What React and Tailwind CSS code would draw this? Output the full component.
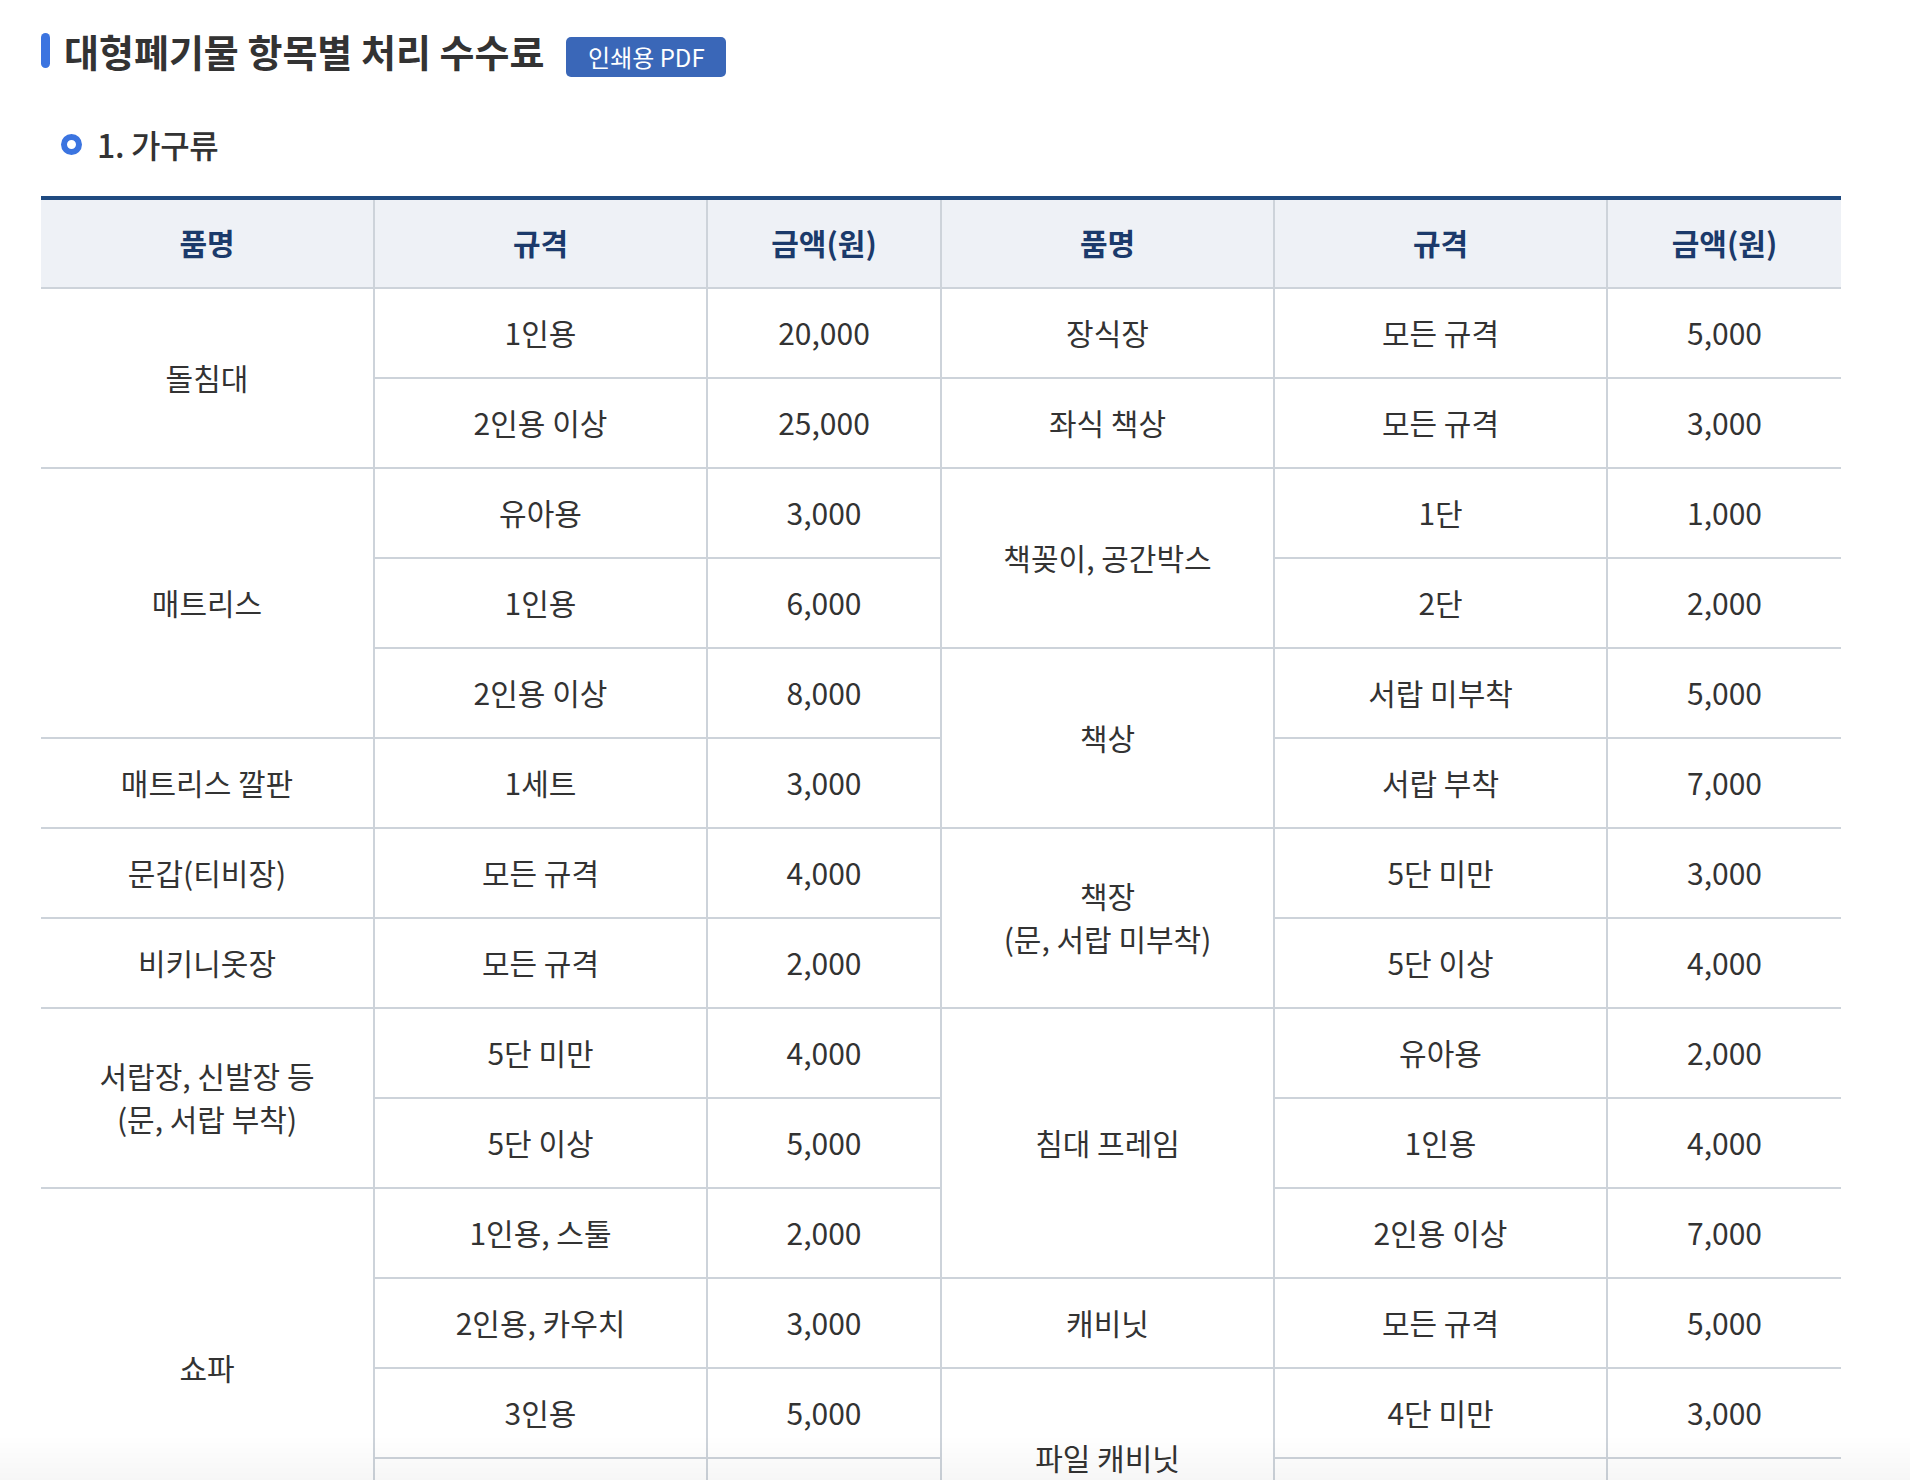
import React from 'react';

const font = { fontFamily: '"Noto Sans CJK KR", "Noto Sans", sans-serif' };

// each row: left half cells + right half cells, null = covered by rowspan
const rows = [
    [{ t: '돌침대', rs: 2 }, { t: '1인용' }, { t: '20,000' }, { t: '장식장' }, { t: '모든 규격' }, { t: '5,000' }],
    [null, { t: '2인용 이상' }, { t: '25,000' }, { t: '좌식 책상' }, { t: '모든 규격' }, { t: '3,000' }],
    [{ t: '매트리스', rs: 3 }, { t: '유아용' }, { t: '3,000' }, { t: '책꽂이, 공간박스', rs: 2 }, { t: '1단' }, { t: '1,000' }],
    [null, { t: '1인용' }, { t: '6,000' }, null, { t: '2단' }, { t: '2,000' }],
    [null, { t: '2인용 이상' }, { t: '8,000' }, { t: '책상', rs: 2 }, { t: '서랍 미부착' }, { t: '5,000' }],
    [{ t: '매트리스 깔판' }, { t: '1세트' }, { t: '3,000' }, null, { t: '서랍 부착' }, { t: '7,000' }],
    [{ t: '문갑(티비장)' }, { t: '모든 규격' }, { t: '4,000' }, { t: ['책장', '(문, 서랍 미부착)'], rs: 2 }, { t: '5단 미만' }, { t: '3,000' }],
    [{ t: '비키니옷장' }, { t: '모든 규격' }, { t: '2,000' }, null, { t: '5단 이상' }, { t: '4,000' }],
    [{ t: ['서랍장, 신발장 등', '(문, 서랍 부착)'], rs: 2 }, { t: '5단 미만' }, { t: '4,000' }, { t: '침대 프레임', rs: 3 }, { t: '유아용' }, { t: '2,000' }],
    [null, { t: '5단 이상' }, { t: '5,000' }, null, { t: '1인용' }, { t: '4,000' }],
    [{ t: '쇼파', rs: 4 }, { t: '1인용, 스툴' }, { t: '2,000' }, null, { t: '2인용 이상' }, { t: '7,000' }],
    [null, { t: '2인용, 카우치' }, { t: '3,000' }, { t: '캐비닛' }, { t: '모든 규격' }, { t: '5,000' }],
    [null, { t: '3인용' }, { t: '5,000' }, { t: '파일 캐비닛', rs: 2 }, { t: '4단 미만' }, { t: '3,000' }],
    // next row continues below the fold
    [null, { t: '' }, { t: '' }, null, { t: '' }, { t: '' }],
];

const widths = ['w-[334px]', 'w-[333px]', 'w-[234px]', 'w-[333px]', 'w-[333px]', 'w-[233px]'];
const heads = ['품명', '규격', '금액(원)', '품명', '규격', '금액(원)'];

const Cell = ({ cell, last }) => (
    <td
        rowSpan={cell.rs || 1}
        className={`h-[90px] p-0 pb-[2px] text-center align-middle border-b-2 border-[#cdd3da] text-[30px] leading-[43px] text-[#333333] ${last ? '' : 'border-r-2'}`}
    >
        {Array.isArray(cell.t) ? cell.t.map((line) => <div key={line}>{line}</div>) : cell.t}
    </td>
);

export default function App() {
    return (
        <div className="relative min-h-[1480px] bg-white pl-[41px] pt-[33px]" style={font}>
            {/* title */}
            <div className="flex items-start">
                <div className="w-[9px] h-[35px] rounded-full bg-[#3b74e0]" />
                <h2 className="ml-[14px] text-[38px] leading-[35px] font-bold text-[#333333]">
                    대형폐기물 항목별 처리 수수료
                </h2>
                <button className="ml-[22px] mt-[4px] w-[160px] h-[40px] rounded-[5px] bg-[#3a67b8] text-white text-[24px] leading-[40px]">
                    인쇄용 PDF
                </button>
            </div>

            {/* section */}
            <div className="flex items-center mt-[49px] h-[36px]">
                <span className="ml-[20px] w-[21px] h-[21px] rounded-full border-[6px] border-[#3b74e0]" />
                <h3 className="ml-[15px] text-[32px] leading-[36px] font-medium tracking-[-0.3px] text-[#333333]">1. 가구류</h3>
            </div>

            <table className="mt-[34px] w-[1800px] table-fixed border-separate border-spacing-0 border-t-4 border-[#1f4a80]">
                <colgroup>
                    {widths.map((w, i) => <col key={i} className={w} />)}
                </colgroup>
                <thead>
                    <tr>
                        {heads.map((h, i) => (
                            <th
                                key={i}
                                className={`h-[89px] p-0 pb-[2px] bg-[#eef1f6] border-b-2 border-[#cdd3da] text-[30px] font-bold text-[#1b3a6b] ${i === 5 ? '' : 'border-r-2'}`}
                            >
                                {h}
                            </th>
                        ))}
                    </tr>
                </thead>
                <tbody>
                    {rows.map((row, ri) => (
                        <tr key={ri}>
                            {row.map((cell, ci) => cell && <Cell key={ci} cell={cell} last={ci === 5} />)}
                        </tr>
                    ))}
                </tbody>
            </table>

            <div className="fixed bottom-0 left-0 right-0 h-[45px] pointer-events-none bg-gradient-to-b from-transparent to-black/[0.035]" />
        </div>
    );
}
